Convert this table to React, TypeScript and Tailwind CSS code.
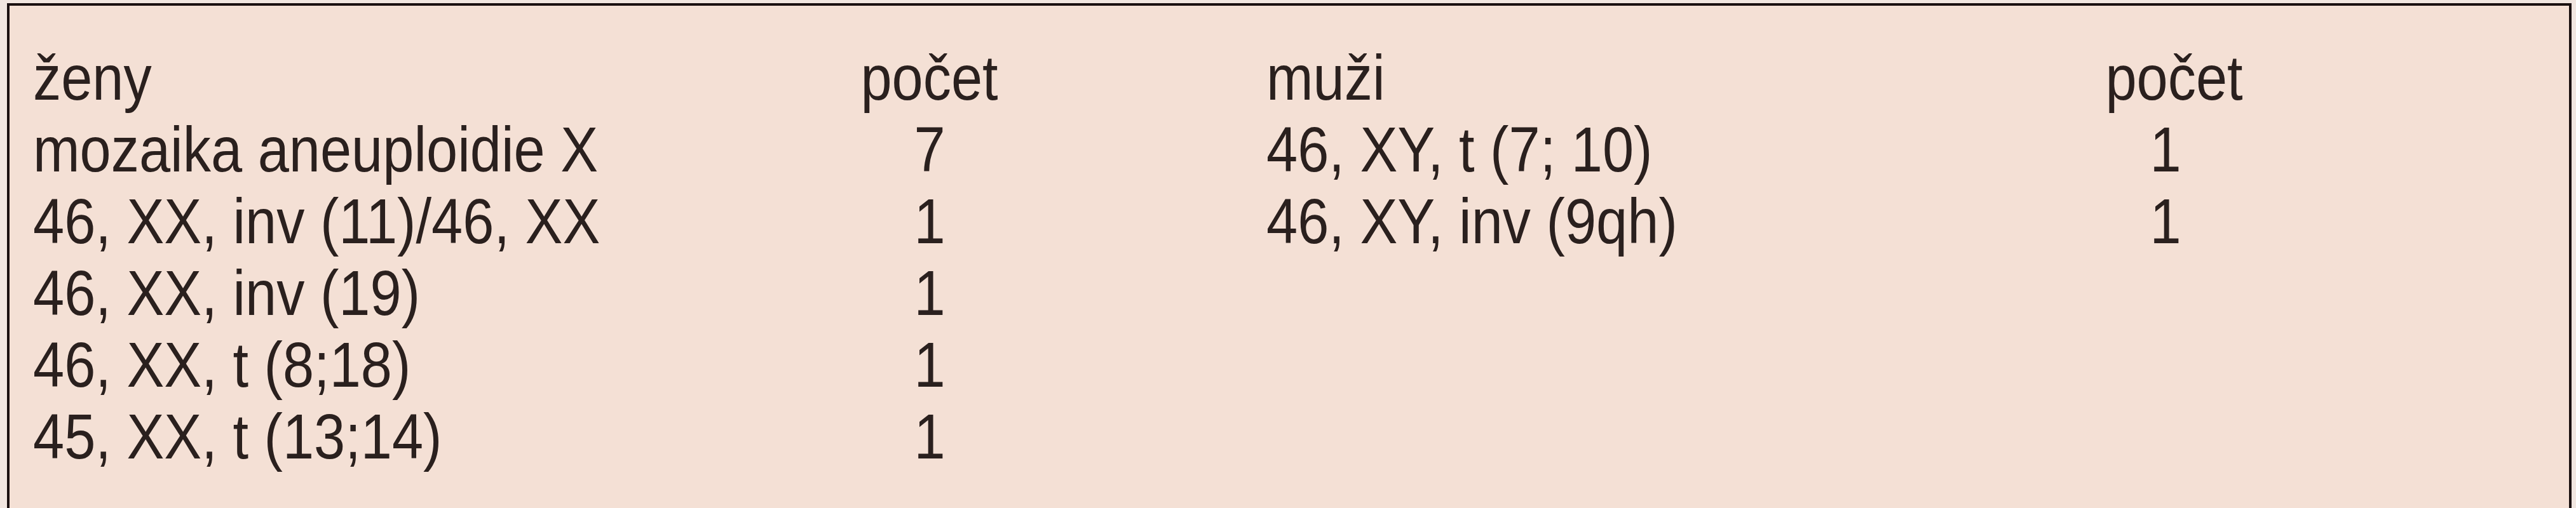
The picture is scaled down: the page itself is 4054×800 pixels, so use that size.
// Karyotype table: women (ženy) on the left, men (muži) on the right

interface Row {
  zeny: string;
  zenyPocet: string;
  muzi: string;
  muziPocet: string;
}

const rows: Row[] = [
  { zeny: "mozaika aneuploidie X", zenyPocet: "7", muzi: "46, XY, t (7; 10)", muziPocet: "1" },
  { zeny: "46, XX, inv (11)/46, XX", zenyPocet: "1", muzi: "46, XY, inv (9qh)", muziPocet: "1" },
  { zeny: "46, XX, inv (19)", zenyPocet: "1", muzi: "", muziPocet: "" },
  { zeny: "46, XX, t (8;18)", zenyPocet: "1", muzi: "", muziPocet: "" },
  { zeny: "45, XX, t (13;14)", zenyPocet: "1", muzi: "", muziPocet: "" },
];

// text is narrower than Arial, squeeze it a bit
function LeftCell({ children }: { children: React.ReactNode }) {
  return (
    <div className="whitespace-nowrap">
      <span className="inline-block origin-left scale-x-[0.875]">{children}</span>
    </div>
  );
}

function CenterCell({ children }: { children: React.ReactNode }) {
  return (
    <div className="whitespace-nowrap text-center">
      <span className="inline-block origin-center scale-x-[0.875]">{children}</span>
    </div>
  );
}

export default function App() {
  return (
    <div className="w-[4054px] h-[800px] overflow-hidden bg-[#f1e6e0] pt-[5px] pl-[11px]">
      <div
        className="w-[4036px] h-[800px] border-[4px] border-[#1a1010] bg-[#f4e0d5] pt-[57px] pl-[37px] text-[#2a201e] text-[101px] leading-[113px]"
        style={{ fontFamily: '"Liberation Sans", Arial, sans-serif' }}
      >
        <div className="grid grid-cols-[881px_1060px_1305px_220px]">
          {/* header */}
          <LeftCell>ženy</LeftCell>
          <CenterCell>počet</CenterCell>
          <LeftCell>muži</LeftCell>
          <CenterCell>počet</CenterCell>

          {rows.map((row, i) => (
            <div key={i} className="contents">
              <LeftCell>{row.zeny}</LeftCell>
              <CenterCell>{row.zenyPocet}</CenterCell>
              <LeftCell>{row.muzi}</LeftCell>
              <CenterCell>{row.muziPocet}</CenterCell>
            </div>
          ))}
        </div>
      </div>
    </div>
  );
}
